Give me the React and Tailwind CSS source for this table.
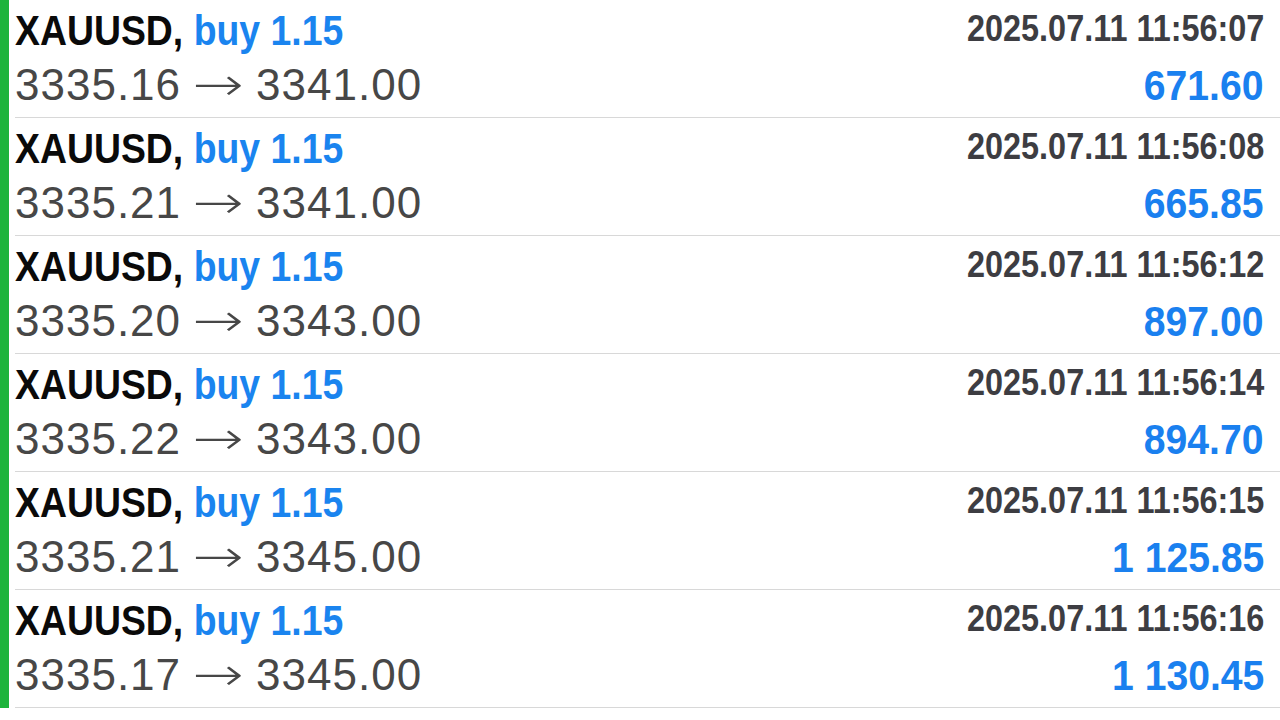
import React from "react";

// trade rows, same order as the history list
const trades = [
  { open: "3335.16", close: "3341.00", time: "2025.07.11 11:56:07", profit: "671.60" },
  { open: "3335.21", close: "3341.00", time: "2025.07.11 11:56:08", profit: "665.85" },
  { open: "3335.20", close: "3343.00", time: "2025.07.11 11:56:12", profit: "897.00" },
  { open: "3335.22", close: "3343.00", time: "2025.07.11 11:56:14", profit: "894.70" },
  { open: "3335.21", close: "3345.00", time: "2025.07.11 11:56:15", profit: "1 125.85" },
  { open: "3335.17", close: "3345.00", time: "2025.07.11 11:56:16", profit: "1 130.45" },
];

const TradeRow = ({ open, close, time, profit }) => (
  <div className="flex h-[118px]">
    <div className="w-[9px] bg-[#1db43b]" />
    <div className="ml-[6px] flex flex-1 justify-between border-b border-[#d8d8d8] pr-[16px]">
      <div>
        <div className="h-[62px] text-[42px] font-bold leading-[62px] whitespace-nowrap">
          <span className="inline-block origin-left scale-x-[0.89]">
            <span className="text-[#0a0a0a]">XAUUSD,</span>{" "}
            <span className="text-[#1a84ef]">buy 1.15</span>
          </span>
        </div>
        <div className="h-[44px] text-[44px] leading-[44px] tracking-[1px] text-[#474747] whitespace-nowrap">
          {open}
          <span className="inline-block w-[75px] text-center">
            <span className="inline-block scale-x-[1.33] font-['DejaVu_Sans'] text-[46px] font-extralight tracking-normal">→</span>
          </span>
          {close}
        </div>
      </div>
      <div className="flex flex-col items-end">
        <div className="h-[57px] text-[36px] font-bold leading-[57px] text-[#3d3d42] whitespace-nowrap">
          <span className="inline-block origin-right scale-x-[0.9]">{time}</span>
        </div>
        <div className="h-[56px] text-[43px] font-bold leading-[56px] text-[#1a80ef] whitespace-nowrap">
          <span className="inline-block origin-right scale-x-[0.91]">{profit}</span>
        </div>
      </div>
    </div>
  </div>
);

export default function App() {
  return (
    <div className="h-[720px] w-[1280px] overflow-hidden bg-white font-['Liberation_Sans',Arial,sans-serif]">
      {trades.map((t, i) => (
        <TradeRow key={i} {...t} />
      ))}
    </div>
  );
}
